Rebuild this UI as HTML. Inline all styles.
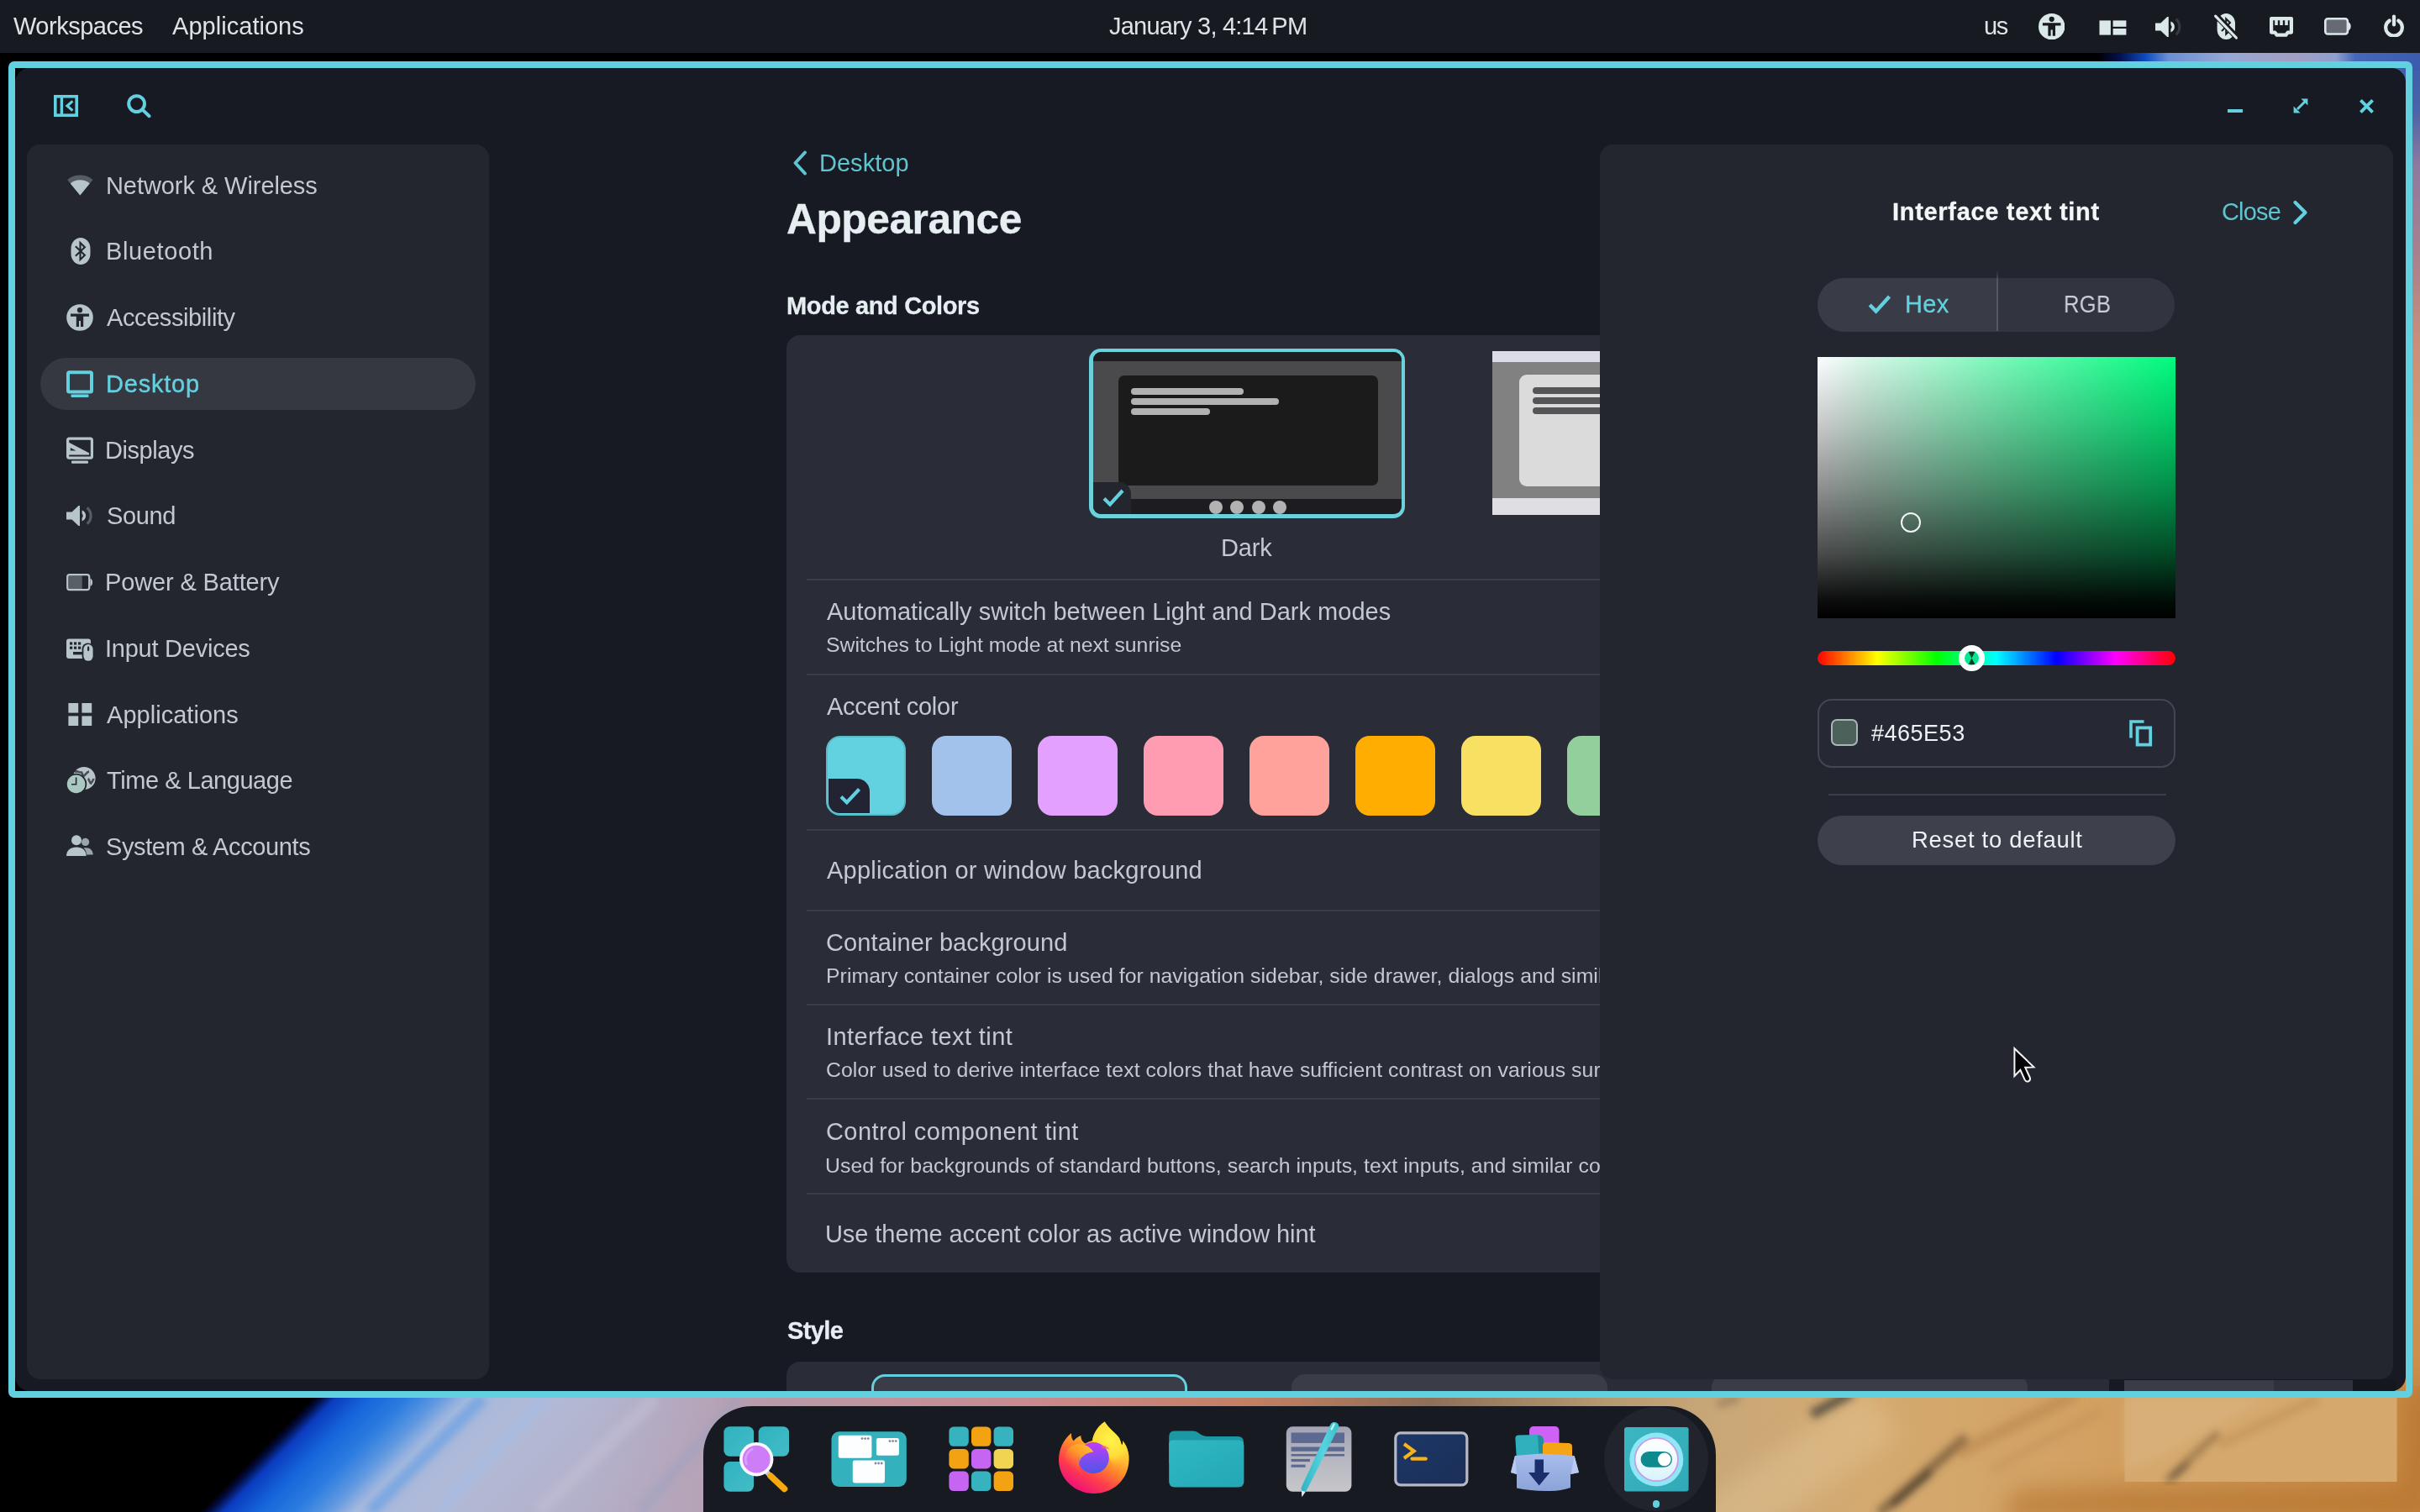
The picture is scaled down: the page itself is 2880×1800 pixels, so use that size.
<!DOCTYPE html>
<html lang="en">
<head>
<meta charset="utf-8">
<title>COSMIC Settings - Appearance</title>
<style>
*{box-sizing:border-box;margin:0;padding:0}
html,body{width:2880px;height:1800px;overflow:hidden;background:#000}
body{position:relative;font-family:"Liberation Sans",sans-serif;font-size:28.0px;color:#c3c9d0}
.abs{position:absolute}
.t{position:absolute;white-space:nowrap;line-height:1;will-change:transform}
#wall{position:absolute;left:0;top:0;width:2880px;height:1800px;background:#000;overflow:hidden}
#panel{position:absolute;left:0;top:0;width:2880px;height:63px;background:#181a22}
#panel .t{color:#dde4e8;font-size:29px;line-height:28px;margin-top:-.35px;top:17.7px}
#panel svg{position:absolute}
#winb{position:absolute;left:10px;top:73px;width:2861px;height:1591px;border:8px solid #63d0df;border-radius:7px}
#win{position:absolute;left:18px;top:81px;width:2845px;height:1575px;border-radius:17px;background:#171a22;overflow:hidden}
#win>.in{position:absolute;left:-18px;top:-81px;width:2880px;height:1800px}
#side{position:absolute;left:32px;top:172px;width:550px;height:1470px;background:#23262f;border-radius:16px}
.nav{position:absolute;left:48px;width:518px;height:62px;border-radius:31px}
.nav.on{background:#363841}
.nav .t{left:80px;top:17.5px;font-size:29px;line-height:28px;margin-top:-.35px;color:#c3c9d0;letter-spacing:.3px}
.nav.on .t{color:#63d0df;-webkit-text-stroke:.4px #63d0df}
.nav svg{position:absolute;left:31px;top:15px;width:32px;height:32px;overflow:visible}
#card{position:absolute;left:936px;top:399px;width:1100px;height:1116px;background:#2a2d37;border-radius:16px}
#card2{position:absolute;left:936px;top:1621px;width:1574px;height:100px;background:#2a2d37;border-radius:16px}
.div{position:absolute;left:960px;width:1000px;height:2px;background:#3b3e48}
.r1{font-size:29px;line-height:28px;margin-top:-.35px;color:#c3c9d0;left:983px;letter-spacing:.25px}
.r2{font-size:24.8px;line-height:24px;margin-top:-.3px;color:#c3c9d0;left:983px;letter-spacing:.2px}
.sw{position:absolute;top:876px;width:95px;height:95px;border-radius:17px}
#drawer{position:absolute;left:1904px;top:172px;width:944px;height:1470px;background:#23262f;border-radius:16px}
.h{font-weight:700;color:#e6eef1;-webkit-text-stroke:.3px #e6eef1}
#dock{position:absolute;left:836.5px;top:1674px;width:1205px;height:200px;background:#181a22;border-radius:58px}
#t1{left:16.00px!important;letter-spacing:-0.500px!important}
#t2{left:205.00px!important;letter-spacing:0.038px!important}
#t3{left:1320.20px!important;letter-spacing:-0.775px!important}
#t4{left:2360.82px!important;letter-spacing:-1.260px!important}
#t5{left:77.66px!important;letter-spacing:-0.070px!important}
#t6{left:77.66px!important;letter-spacing:0.613px!important}
#t7{left:78.56px!important;letter-spacing:-0.405px!important}
#t8{left:77.66px!important;letter-spacing:0.780px!important}
#t9{left:77.48px!important;letter-spacing:-0.446px!important}
#t10{left:78.56px!important;letter-spacing:-0.375px!important}
#t11{left:77.48px!important;letter-spacing:-0.137px!important}
#t12{left:77.48px!important;letter-spacing:-0.240px!important}
#t13{left:78.74px!important;letter-spacing:0.037px!important}
#t14{left:79.28px!important;letter-spacing:-0.447px!important}
#t15{left:78.38px!important;letter-spacing:-0.384px!important}
#t16{left:975.02px!important;letter-spacing:0.020px!important}
#t17{left:935.64px!important;letter-spacing:-0.460px!important}
#t18{left:935.64px!important;letter-spacing:-0.361px!important}
#t19{left:1453.20px!important;letter-spacing:-0.200px!important}
#t21{left:983.90px!important;letter-spacing:0.013px!important}
#t22{left:982.82px!important;letter-spacing:-0.035px!important}
#t23{left:983.72px!important;letter-spacing:-0.275px!important}
#t24{left:983.72px!important;letter-spacing:0.213px!important}
#t25{left:983.00px!important;letter-spacing:0.108px!important}
#t26{left:982.82px!important;letter-spacing:0.044px!important}
#t27{left:982.82px!important;letter-spacing:0.410px!important}
#t28{left:983.00px!important;letter-spacing:0.081px!important}
#t29{left:982.64px!important;letter-spacing:0.406px!important}
#t30{left:982.10px!important;letter-spacing:0.074px!important}
#t31{left:982.10px!important;letter-spacing:-0.073px!important}
#t32{left:936.90px!important;letter-spacing:-0.630px!important}
#t33{left:2252.46px!important;letter-spacing:0.690px!important}
#t34{left:2644.10px!important;letter-spacing:-0.825px!important}
#t35{left:2266.56px!important;letter-spacing:0.310px!important}
#t36{left:2455.56px!important;letter-spacing:0.380px!important}
#t37{left:2226.82px!important;letter-spacing:0.510px!important}
#t38{left:2274.56px!important;letter-spacing:0.734px!important}
</style>
</head>
<body>
<div id="wall">
<svg width="2880" height="1800" viewBox="0 0 2880 1800" style="position:absolute;left:0;top:0">
  <defs>
    <linearGradient id="atm" gradientUnits="userSpaceOnUse" x1="372" y1="1664" x2="656" y2="1944">
      <stop offset="0" stop-color="#000"/>
      <stop offset=".018" stop-color="#020a3a"/>
      <stop offset=".05" stop-color="#0a3cc0"/>
      <stop offset=".12" stop-color="#1565da"/>
      <stop offset=".2" stop-color="#2a7ce0"/>
      <stop offset=".27" stop-color="#5f98e0"/>
      <stop offset=".33" stop-color="#a6b9de"/>
      <stop offset=".5" stop-color="#b2bad6"/>
      <stop offset="1" stop-color="#b5a9c0"/>
    </linearGradient>
    <linearGradient id="land" x1="0" y1="0" x2="1" y2="0">
      <stop offset="0" stop-color="#b3a7bf" stop-opacity="0"/>
      <stop offset=".1" stop-color="#b99aa8"/>
      <stop offset=".24" stop-color="#c98a90"/>
      <stop offset=".36" stop-color="#c47f63"/>
      <stop offset=".46" stop-color="#8f6f58"/>
      <stop offset=".56" stop-color="#b89a72"/>
      <stop offset=".62" stop-color="#caa878"/>
      <stop offset=".7" stop-color="#d4aa70"/>
      <stop offset=".82" stop-color="#d3a162"/>
      <stop offset="1" stop-color="#c98a46"/>
    </linearGradient>
    <linearGradient id="topg" gradientUnits="userSpaceOnUse" x1="2496" y1="0" x2="2880" y2="0">
      <stop offset="0" stop-color="#000"/>
      <stop offset=".07" stop-color="#03104e"/>
      <stop offset=".15" stop-color="#0d4cc0"/>
      <stop offset=".22" stop-color="#6a8fd4"/>
      <stop offset=".4" stop-color="#96a8d6"/>
      <stop offset=".6" stop-color="#a39fc4"/>
      <stop offset=".74" stop-color="#8f9fd0"/>
      <stop offset=".8" stop-color="#4468ba"/>
      <stop offset="1" stop-color="#3b5cae"/>
    </linearGradient>
    <linearGradient id="rightg" gradientUnits="userSpaceOnUse" x1="0" y1="60" x2="0" y2="1800">
      <stop offset="0" stop-color="#3b5cae"/>
      <stop offset=".04" stop-color="#4a63a8"/>
      <stop offset=".08" stop-color="#8f7ba0"/>
      <stop offset=".14" stop-color="#a8808f"/>
      <stop offset=".2" stop-color="#c98f7a"/>
      <stop offset=".3" stop-color="#d9a06c"/>
      <stop offset=".6" stop-color="#d39a5c"/>
      <stop offset="1" stop-color="#c98c48"/>
    </linearGradient>
  <filter id="bl2" x="-10%" y="-30%" width="120%" height="160%"><feGaussianBlur stdDeviation="14"/></filter>
  <filter id="bl" x="-5%" y="-5%" width="110%" height="110%"><feGaussianBlur stdDeviation="5"/></filter>
  </defs>
  <rect x="0" y="60" width="2880" height="50" fill="url(#topg)"/>
  <rect x="2845" y="84" width="35" height="1716" fill="url(#rightg)"/>
  <rect x="0" y="1650" width="2880" height="150" fill="url(#atm)"/>
  <rect x="700" y="1650" width="2180" height="150" fill="url(#land)"/>
  <g filter="url(#bl2)"><path d="M2030 1830 L2240 1680" stroke="#e2c696" stroke-width="70" opacity=".45"/><path d="M2380 1810 L2400 1775 L2528 1768 L2856 1768 L2862 1650 L2900 1650 L2900 1810 Z" fill="#b5742f" opacity=".7"/></g>
  <g filter="url(#bl)">
    <path d="M520 1800 L650 1664" stroke="#9fc0ee" stroke-width="10" opacity=".55"/>
    <path d="M440 1800 L575 1664" stroke="#4d93e6" stroke-width="14" opacity=".5"/>
    <path d="M640 1800 L780 1664" stroke="#c6c2d8" stroke-width="16" opacity=".5"/>
    <path d="M760 1800 L880 1664" stroke="#9a9fc0" stroke-width="12" opacity=".45"/>
    <path d="M2236 1802 L2340 1711" stroke="#5a4530" stroke-width="12" opacity=".6"/>
    <path d="M2252 1792 L2298 1752" stroke="#2c2824" stroke-width="7" opacity=".75"/>
    <path d="M2330 1730 L2470 1660" stroke="#b07c48" stroke-width="16" opacity=".4"/>
    <path d="M2370 1750 L2500 1680" stroke="#b8844c" stroke-width="10" opacity=".3"/>
    <path d="M2156 1684 L2204 1658" stroke="#3e3c34" stroke-width="12" opacity=".75"/>
    <path d="M2044 1672 L2070 1664" stroke="#6a5a48" stroke-width="8" opacity=".5"/>
  </g>
  <rect x="2528.5" y="1640" width="324" height="124" fill="#d5a96e"/>
  <g filter="url(#bl)"><path d="M2578 1764 L2640 1705" stroke="#7a5a38" stroke-width="9" opacity=".55"/><path d="M2584 1760 L2604 1742" stroke="#3a3430" stroke-width="6" opacity=".6"/><path d="M2640 1720 L2760 1664" stroke="#b8844c" stroke-width="14" opacity=".35"/><path d="M2528 1664 L2700 1664 L2560 1740 L2528 1750 Z" fill="#dcb684" opacity=".5"/></g>
</svg>
</div>
<div id="panel">
  <span id="t1" class="t" style="left:16px">Workspaces</span>
  <span id="t2" class="t" style="left:205px;letter-spacing:.4px">Applications</span>
  <span id="t3" class="t" style="left:1322px">January 3, 4:14&#8239;PM</span>
  <span id="t4" class="t" style="left:2361px">us</span>
  <!-- accessibility -->
  <svg style="left:2425.5px;top:16px" width="31.4" height="31.4" viewBox="0 0 32 32"><circle cx="16" cy="16" r="16" fill="#dbe8ea"/><circle cx="16" cy="7" r="3.2" fill="#181a22"/><path d="M5 11.4 H27 V14.8 H20.4 V27.2 H17.1 V20 H14.9 V27.2 H11.6 V14.8 H5 Z" fill="#181a22"/></svg>
  <!-- tiling -->
  <svg style="left:2498px;top:23.6px" width="33" height="18" viewBox="0 0 33 18"><rect x=".5" y=".4" width="13.4" height="17.2" fill="#dbe8ea"/><rect x="16.6" y=".4" width="15.8" height="7.4" fill="#dbe8ea"/><rect x="16.6" y="10" width="15.8" height="7.6" fill="#dbe8ea"/></svg>
  <!-- volume -->
  <svg style="left:2565px;top:19.5px" width="32" height="24" viewBox="0 0 32 24"><path d="M0 7.4 H6.4 L14.2 0 H15.8 V24 H14.2 L6.4 16.6 H0 Z" fill="#dbe8ea"/><path d="M18.4 5.6 C24.4 7.6 24.4 16.4 18.4 18.4 V14.6 C20 13.4 20 10.6 18.4 9.4 Z" fill="#dbe8ea"/><path d="M24.6 2.8 C30.2 7.2 30.2 16.8 24.6 21.2" fill="none" stroke="#dbe8ea" stroke-width="3" opacity=".16"/></svg>
  <!-- bluetooth off -->
  <svg style="left:2634px;top:15px" width="30" height="33" viewBox="0 0 30 33"><rect x="4.6" y="1" width="21.4" height="31" rx="10.7" ry="12" fill="#dbe8ea"/><path d="M10 11 L20 21 L15.2 25.6 V7.4 L20 12 L10 22" fill="none" stroke="#181a22" stroke-width="2"/><path d="M2.2 2.4 L29 30.4" stroke="#181a22" stroke-width="7"/><path d="M2.6 4.2 L27.4 30" stroke="#dbe8ea" stroke-width="3.2" stroke-linecap="round"/></svg>
  <!-- wired -->
  <svg style="left:2700.5px;top:19.5px" width="28" height="24" viewBox="0 0 28 24"><path d="M2.1 2.1 H25.9 V18.6 H21.6 L19.4 21.7 H8.6 L6.4 18.6 H2.1 Z" fill="none" stroke="#dbe8ea" stroke-width="4.2" stroke-linejoin="round"/><path d="M6.2 3 H9.8 V10 H6.2 Z M12.2 3 H15.8 V10 H12.2 Z M18.2 3 H21.8 V10 H18.2 Z" fill="#dbe8ea"/></svg>
  <!-- battery -->
  <svg style="left:2765.5px;top:21px" width="33" height="21" viewBox="0 0 33 21"><rect x="1.3" y="1.3" width="26.6" height="18.2" rx="3" fill="#676a75" stroke="#dbe8ea" stroke-width="2.6"/><path d="M29 5.6 C32.6 6.6 32.6 14.2 29 15.2 Z" fill="#dbe8ea"/></svg>
  <!-- power -->
  <svg style="left:2835.8px;top:16.6px" width="26" height="27" viewBox="0 0 26 27"><path d="M7.6 7.6 A9.8 9.8 0 1 0 18.4 7.6" fill="none" stroke="#dbe8ea" stroke-width="4.3" stroke-linecap="round"/><path d="M13 2.6 V12.4" stroke="#dbe8ea" stroke-width="4.2" stroke-linecap="round"/></svg>
</div>
<div id="winb"></div><div id="win"><div class="in">
<div id="side"></div>
<div class="nav" style="top:189.5px"><svg viewBox="0 0 32 32"><g transform="translate(.5,-1.2)"><path d="M15.8 28.6 L0.6 10.2 A24 24 0 0 1 31 10.2 Z" fill="#b7c5c9" opacity=".34"/><path d="M15.8 28.6 L4.3 14.6 A18.2 18.2 0 0 1 27.3 14.6 Z" fill="#b7c5c9"/></g></svg><span id="t5" class="t">Network &amp; Wireless</span></div>
<div class="nav" style="top:268.2px"><svg viewBox="0 0 32 32"><g transform="translate(.9,0)"><rect x="4.6" y="0" width="23" height="32" rx="11.5" ry="13" fill="#b7c5c9"/><path d="M10 10.2 L21 20.8 L15.6 26 V6 L21 11.2 L10 21.8" fill="none" stroke="#23262f" stroke-width="2.1" stroke-linejoin="miter"/></g></svg><span id="t6" class="t">Bluetooth</span></div>
<div class="nav" style="top:347.0px"><svg viewBox="0 0 32 32"><circle cx="16" cy="16" r="15.8" fill="#b7c5c9"/><circle cx="16" cy="7.2" r="3.1" fill="#23262f"/><path d="M5 11.6 H27 V14.8 H20.2 V27 H17 V20 H15 V27 H11.8 V14.8 H5 Z" fill="#23262f"/></svg><span id="t7" class="t">Accessibility</span></div>
<div class="nav on" style="top:425.7px"><svg viewBox="0 0 32 32"><rect x="2" y="2.2" width="28" height="23.2" rx="1.5" fill="none" stroke="#63d0df" stroke-width="4"/><rect x="5.5" y="28.6" width="21" height="3.4" rx="1" fill="#63d0df"/></svg><span id="t8" class="t">Desktop</span></div>
<div class="nav" style="top:504.5px"><svg viewBox="0 0 32 32"><rect x="1.6" y="2.2" width="28.8" height="23" rx="2" fill="none" stroke="#b7c5c9" stroke-width="3.2"/><path d="M1.6 6 L27 19.2 V21.6 H1.6 Z" fill="#b7c5c9"/><path d="M4.8 13 L11.5 16.6 H4.8 Z" fill="#23262f"/><rect x="6" y="28.6" width="20" height="3.2" rx="1" fill="#b7c5c9"/></svg><span id="t9" class="t">Displays</span></div>
<div class="nav" style="top:583.2px"><svg viewBox="0 0 32 32"><path d="M0 11.5 H6.5 L14.5 4 H16 V28 H14.5 L6.5 20.5 H0 Z" fill="#b7c5c9"/><path d="M18.6 9.6 C24.6 11.6 24.6 20.4 18.6 22.4 V18.6 C20.2 17.4 20.2 14.6 18.6 13.4 Z" fill="#b7c5c9"/><path d="M24.6 6.4 C30.6 11 30.6 21 24.6 25.6" fill="none" stroke="#b7c5c9" stroke-width="3.2" opacity=".35"/></svg><span id="t10" class="t">Sound</span></div>
<div class="nav" style="top:661.9px"><svg viewBox="0 0 32 32"><rect x="1.2" y="7.2" width="26" height="18" rx="2.6" fill="none" stroke="#b7c5c9" stroke-width="2.2"/><rect x="2.3" y="8.3" width="16.4" height="15.8" fill="#b7c5c9" opacity=".36"/><path d="M28.4 11.5 C32 12.5 32 19.9 28.4 20.9 Z" fill="#b7c5c9"/></svg><span id="t11" class="t">Power &amp; Battery</span></div>
<div class="nav" style="top:740.7px"><svg viewBox="0 0 32 32"><rect x="0" y="4.5" width="29" height="23.5" rx="3" fill="#b7c5c9"/><g fill="#23262f"><rect x="4" y="8.4" width="3.2" height="3.2"/><rect x="9" y="8.4" width="3.2" height="3.2"/><rect x="14" y="8.4" width="3.2" height="3.2"/><rect x="4" y="13.6" width="3.2" height="3.2"/><rect x="9" y="13.6" width="3.2" height="3.2"/><rect x="14" y="13.6" width="3.2" height="3.2"/><rect x="8" y="20" width="11" height="3.4"/><rect x="18.6" y="9.4" width="14" height="23" rx="7"/></g><rect x="20.4" y="11" width="11.2" height="19.8" rx="5.6" fill="#b7c5c9"/><rect x="25" y="13.6" width="2.2" height="5.6" rx="1.1" fill="#23262f"/></svg><span id="t12" class="t">Input Devices</span></div>
<div class="nav" style="top:819.4px"><svg viewBox="0 0 32 32"><g fill="#b7c5c9"><rect x="2.4" y="3" width="11.8" height="11.6"/><rect x="18.4" y="3" width="11.8" height="11.6"/><rect x="2.4" y="18.4" width="11.8" height="11.6"/><rect x="18.4" y="18.4" width="11.8" height="11.6"/></g></svg><span id="t13" class="t">Applications</span></div>
<div class="nav" style="top:898.2px"><svg viewBox="0 0 32 32"><circle cx="21" cy="13.5" r="13.6" fill="#b7c5c9"/><path d="M10 6 C13 4 15 7 18 6.4 C20 8 18 10 20.4 11 C23 9.6 24 6 27 5.4 M25.6 14 C27.6 15 27 18 29.2 19.6 C30.6 18 31.6 16 32.6 14" fill="none" stroke="#23262f" stroke-width="2.6" opacity=".75"/><circle cx="11.6" cy="20.4" r="12.6" fill="#23262f"/><circle cx="11.6" cy="20.4" r="10.8" fill="#a9c9c0"/><path d="M11.6 12.6 V20.8 H6" fill="none" stroke="#23262f" stroke-width="1.6"/></svg><span id="t14" class="t">Time &amp; Language</span></div>
<div class="nav" style="top:976.9px"><svg viewBox="0 0 32 32"><g fill="#b7c5c9"><circle cx="22.6" cy="10.4" r="4.6" opacity=".8"/><path d="M20.5 17.6 C27 16 31.6 19.6 31.8 25.6 H24 C23.8 22 22.6 19.4 20.5 17.6 Z" opacity=".8"/><circle cx="12" cy="8.2" r="6"/><path d="M0 27 C0 20 5 16.4 12 16.4 C19 16.4 23.6 20 23.6 27 Z"/></g></svg><span id="t15" class="t">System &amp; Accounts</span></div>
<!-- window header icons -->
<svg class="abs" style="left:64px;top:113px" width="29" height="26" viewBox="0 0 29 26"><rect x="1.8" y="1.8" width="25.4" height="22.4" fill="none" stroke="#63d0df" stroke-width="3.6"/><path d="M9.4 2 V24" stroke="#63d0df" stroke-width="3.4"/><path d="M22.4 7.4 L16 13 L22.4 18.6" fill="none" stroke="#63d0df" stroke-width="3.2"/></svg>
<svg class="abs" style="left:150px;top:111px" width="31" height="31" viewBox="0 0 31 31"><circle cx="12.6" cy="12.6" r="9.4" fill="none" stroke="#63d0df" stroke-width="4"/><path d="M19.6 19.6 L27.6 27.2" stroke="#63d0df" stroke-width="4" stroke-linecap="round"/></svg>
<div class="abs" style="left:2651px;top:130px;width:17.5px;height:4px;background:#63d0df"></div>
<svg class="abs" style="left:2728px;top:116px" width="20" height="20" viewBox="0 0 20 20"><path d="M6 14 L15 5" stroke="#63d0df" stroke-width="3"/><path d="M10.4 1.6 H18.4 V9.6 Z M1.6 10.4 V18.4 H9.6 Z" fill="#63d0df"/></svg>
<svg class="abs" style="left:2807px;top:117px" width="19" height="19" viewBox="0 0 19 19"><path d="M2.4 2.4 L16.6 16.6 M16.6 2.4 L2.4 16.6" stroke="#63d0df" stroke-width="3.8"/></svg>
<div id="main">
  <svg class="abs" style="left:942px;top:178px" width="20" height="32" viewBox="0 0 20 32"><path d="M16 3.5 L4.5 16 L16 28.5" fill="none" stroke="#5fc4cf" stroke-width="4" stroke-linecap="round" stroke-linejoin="round"/></svg>
  <span id="t16" class="t" style="left:977px;top:180.1px;color:#5fc4cf;font-size:29px;line-height:28px;margin-top:-.35px;letter-spacing:.2px">Desktop</span>
  <span id="t17" class="t h" style="left:936px;top:237.2px;font-size:49.7px;line-height:48px;margin-top:-.6px;letter-spacing:.3px">Appearance</span>
  <span id="t18" class="t h" style="left:936px;top:350px;font-size:29px;line-height:28px;margin-top:-.35px">Mode and Colors</span>
  <div id="card"></div>
  <!-- dark mode thumbnail -->
  <div class="abs" style="left:1296px;top:414.6px;width:376.4px;height:202.4px;border-radius:14px;background:#6bd2dc"></div>
  <div class="abs" style="left:1300.5px;top:419.1px;width:367.4px;height:193.4px;border-radius:9.5px;background:#4a4a4c;overflow:hidden">
    <div class="abs" style="left:0;top:0;width:368px;height:11px;background:#1c1c21"></div>
    <div class="abs" style="left:0;top:174.5px;width:368px;height:20px;background:#1c1c21"></div>
    <div class="abs" style="left:30px;top:28px;width:309px;height:131px;border-radius:7px;background:#1b1b1c"></div>
    <div class="abs" style="left:45.5px;top:43px;width:134px;height:8px;border-radius:4px;background:#b2b2b2"></div>
    <div class="abs" style="left:45.5px;top:55px;width:176px;height:8px;border-radius:4px;background:#b2b2b2"></div>
    <div class="abs" style="left:45.5px;top:67px;width:94px;height:7.5px;border-radius:4px;background:#b2b2b2"></div>
    <div class="abs" style="left:138.5px;top:176.6px;width:16px;height:16px;border-radius:8px;background:#b2b2b2"></div>
    <div class="abs" style="left:163.8px;top:176.6px;width:16px;height:16px;border-radius:8px;background:#b2b2b2"></div>
    <div class="abs" style="left:189.1px;top:176.6px;width:16px;height:16px;border-radius:8px;background:#b2b2b2"></div>
    <div class="abs" style="left:214.4px;top:176.6px;width:16px;height:16px;border-radius:8px;background:#b2b2b2"></div>
    <div class="abs" style="left:-4px;top:154.5px;width:49px;height:44px;border-radius:0 14px 0 0;background:#23252f"></div>
  </div>
  <svg class="abs" style="left:1311px;top:580px" width="28" height="26" viewBox="0 0 28 26"><path d="M3 13.5 L10 20.5 L25 4" fill="none" stroke="#63d0df" stroke-width="4.2"/></svg>
  <span id="t19" class="t r1" style="left:1455px;top:638.6px;letter-spacing:.4px">Dark</span>
  <!-- light mode thumbnail -->
  <div class="abs" style="left:1776px;top:418px;width:372px;height:195px;background:#818182;overflow:hidden">
    <div class="abs" style="left:0;top:0;width:372px;height:12.5px;background:#dcdce6"></div>
    <div class="abs" style="left:0;top:175px;width:372px;height:20px;background:#dedee4"></div>
    <div class="abs" style="left:31.5px;top:27.5px;width:309px;height:133px;border-radius:9px;background:#dbdbdc"></div>
    <div class="abs" style="left:47.5px;top:43px;width:134px;height:8px;border-radius:4px;background:#555557"></div>
    <div class="abs" style="left:47.5px;top:55px;width:176px;height:8px;border-radius:4px;background:#555557"></div>
    <div class="abs" style="left:47.5px;top:67px;width:94px;height:7.5px;border-radius:4px;background:#555557"></div>
  </div>
  <span id="t20" class="t r1" style="left:1930px;top:638.6px">Light</span>
  <div class="div" style="top:688.6px"></div>
  <span id="t21" class="t r1" style="top:714px">Automatically switch between Light and Dark modes</span>
  <span id="t22" class="t r2" style="top:756.7px">Switches to Light mode at next sunrise</span>
  <div class="div" style="top:801.8px"></div>
  <span id="t23" class="t r1" style="top:827px">Accent color</span>
  <div class="sw" style="left:983px;background:#62d2e0;border:2px solid #58bcc6"></div>
  <div class="abs" style="left:986px;top:927px;width:49px;height:41px;background:#222433;border-radius:0 15px 0 13px"></div>
  <svg class="abs" style="left:998px;top:936px" width="28" height="24" viewBox="0 0 28 24"><path d="M3 12.5 L9.8 19.3 L24.5 3.5" fill="none" stroke="#63d0df" stroke-width="4.2"/></svg>
  <div class="sw" style="left:1109px;background:#a2c2ec"></div>
  <div class="sw" style="left:1235px;background:#e4a0fe"></div>
  <div class="sw" style="left:1361px;background:#ff9cb1"></div>
  <div class="sw" style="left:1487px;background:#ffa29c"></div>
  <div class="sw" style="left:1613px;background:#ffad00"></div>
  <div class="sw" style="left:1739px;background:#f7e062"></div>
  <div class="sw" style="left:1865px;background:#92cf9c"></div>
  <div class="div" style="top:986.7px"></div>
  <span id="t24" class="t r1" style="top:1022.2px">Application or window background</span>
  <div class="div" style="top:1082.7px"></div>
  <span id="t25" class="t r1" style="top:1107.9px">Container background</span>
  <span id="t26" class="t r2" style="top:1150.7px">Primary container color is used for navigation sidebar, side drawer, dialogs and similar widgets</span>
  <div class="div" style="top:1195.3px"></div>
  <span id="t27" class="t r1" style="top:1220.7px">Interface text tint</span>
  <span id="t28" class="t r2" style="top:1262.5px">Color used to derive interface text colors that have sufficient contrast on various surfaces</span>
  <div class="div" style="top:1307.3px"></div>
  <span id="t29" class="t r1" style="top:1333.2px">Control component tint</span>
  <span id="t30" class="t r2" style="top:1376.2px">Used for backgrounds of standard buttons, search inputs, text inputs, and similar components</span>
  <div class="div" style="top:1420.3px"></div>
  <span id="t31" class="t r1" style="top:1455.8px">Use theme accent color as active window hint</span>
  <span id="t32" class="t h" style="left:936px;top:1570px;font-size:29px;line-height:28px;margin-top:-.35px">Style</span>
  <div id="card2"></div>
  <div class="abs" style="left:1037px;top:1636px;width:376px;height:60px;border-radius:16px;border:3.6px solid #63d0df;background:#3a3d48"></div>
  <div class="abs" style="left:1537px;top:1636px;width:376px;height:60px;border-radius:16px;background:#3a3d48"></div>
  <div class="abs" style="left:2037px;top:1636px;width:376px;height:60px;border-radius:16px;background:#3a3d48"></div>
  <div class="abs" style="left:2528px;top:1642px;width:324px;height:30px;background:#15171e"></div>
  <div class="abs" style="left:2528px;top:1643px;width:178px;height:30px;background:#3a3d48"></div>
  <div class="abs" style="left:2706px;top:1643px;width:94px;height:30px;background:#2f323c"></div>
</div>
<div id="drawer"></div>
<div id="dr">
  <span id="t33" class="t" style="left:2253px;top:238.5px;font-size:29px;line-height:28px;margin-top:-.35px;font-weight:700;color:#f4f7f8;letter-spacing:.55px;-webkit-text-stroke:.3px #f4f7f8">Interface text tint</span>
  <span id="t34" class="t" style="left:2645px;top:238.5px;font-size:29px;line-height:28px;margin-top:-.35px;color:#5fc4cf;letter-spacing:.3px">Close</span>
  <svg class="abs" style="left:2726px;top:236px" width="24" height="34" viewBox="0 0 24 34"><path d="M5.5 5 L17.5 17 L5.5 29" fill="none" stroke="#63d0df" stroke-width="4.2" stroke-linecap="round" stroke-linejoin="round"/></svg>
  <!-- segmented control -->
  <div class="abs" style="left:2163px;top:330.5px;width:425px;height:64px;border-radius:32px;background:#32353f;overflow:hidden">
    <div class="abs" style="left:0;top:0;width:213.5px;height:64px;background:#393c47"></div>
  </div>
  <div class="abs" style="left:2376px;top:322px;width:2px;height:72px;background:linear-gradient(#23262f00,#555862 18%,#555862)"></div>
  <svg class="abs" style="left:2222px;top:349px" width="30" height="27" viewBox="0 0 30 27"><path d="M3.2 14 L10.6 21.6 L26.5 4" fill="none" stroke="#63d0df" stroke-width="4.4"/></svg>
  <span id="t35" class="t" style="left:2268px;top:348.6px;font-size:29px;line-height:28px;margin-top:-.35px;color:#63d0df;letter-spacing:.4px;-webkit-text-stroke:.3px #63d0df">Hex</span>
  <span id="t36" class="t" style="left:2457px;top:348.6px;font-size:29px;line-height:28px;margin-top:-.35px;color:#c9cfd5;transform:scaleX(.88);transform-origin:0 0">RGB</span>
  <!-- saturation / value field -->
  <div class="abs" style="left:2163px;top:425px;width:426px;height:311px;background:linear-gradient(to bottom,rgba(0,0,0,0) 0%,rgba(0,0,0,.2) 25%,rgba(0,0,0,.43) 50%,rgba(0,0,0,.7) 75%,rgba(0,0,0,.95) 93%,#000 100%),linear-gradient(to right,#fdfdff 0%,#d4f7e6 14%,#00fb7e 100%)"></div>
  <div class="abs" style="left:2261.5px;top:609.5px;width:24px;height:24px;border-radius:12px;border:2.4px solid #f2f5f5"></div>
  <!-- hue slider -->
  <div class="abs" style="left:2163px;top:775px;width:426px;height:17px;border-radius:8.5px;background:linear-gradient(to right,#f00 0%,#ff0 16.66%,#0f0 33.33%,#0ff 50%,#00f 66.66%,#f0f 83.33%,#f00 100%)"></div>
  <div class="abs" style="left:2330.9px;top:768.1px;width:31px;height:31px;border-radius:50%;background:#05e88f;border:7.6px solid #fbfefd"></div>
  <svg class="abs" style="left:2338px;top:775.2px" width="17" height="17" viewBox="0 0 17 17"><path d="M4.6 1 H12.4 L8.5 8.4 Z M4.6 16 H12.4 L8.5 8.6 Z" fill="#063d27"/></svg>
  <!-- hex input -->
  <div class="abs" style="left:2163px;top:831.5px;width:426px;height:82px;border-radius:17px;border:2.4px solid #434751;background:#262933"></div>
  <div class="abs" style="left:2179px;top:856px;width:32px;height:32px;border-radius:7px;border:2.2px solid #a9b6b5;background:#4b6159"></div>
  <span id="t37" class="t" style="left:2227px;top:860.1px;font-size:27px;line-height:26px;margin-top:-.35px;color:#eef2f4;letter-spacing:.6px">#465E53</span>
  <svg class="abs" style="left:2534px;top:857px" width="28" height="32" viewBox="0 0 28 32"><path d="M2 21.5 V2 H17.5" fill="none" stroke="#63d0df" stroke-width="3.6"/><rect x="9.6" y="9.4" width="15.6" height="20.2" fill="none" stroke="#63d0df" stroke-width="3.8"/></svg>
  <div class="abs" style="left:2176px;top:945px;width:402px;height:2px;background:#3b3e48"></div>
  <div class="abs" style="left:2163px;top:970.5px;width:426px;height:59px;border-radius:30px;background:#3e414b"></div>
  <span id="t38" class="t" style="left:2276px;top:987.1px;font-size:27.4px;line-height:26.5px;margin-top:-.35px;color:#eef2f4;letter-spacing:.65px">Reset to default</span>
  <!-- pointer -->
  <svg class="abs" style="left:2394px;top:1244.3px" width="32" height="48" viewBox="0 0 32 48"><path d="M3.4 4.2 V37 L10.4 29.8 L15.6 41.4 Q17.2 44.4 20.2 43.2 Q22.8 41.8 21.8 39 L16.2 26.8 L26.4 26.4 Z" fill="#050508" stroke="#f4f4f8" stroke-width="2" stroke-linejoin="miter"/></svg>
</div>
</div></div>
<div id="dock"></div>
<div id="dockicons">
<!-- launcher -->
<svg class="abs" style="left:860px;top:1697px" width="82" height="82" viewBox="0 0 82 82">
  <defs><linearGradient id="tl" x1="0" y1="0" x2="1" y2="1"><stop offset="0" stop-color="#2fb3bf"/><stop offset="1" stop-color="#43bcc7"/></linearGradient></defs>
  <rect x="1.4" y="1.3" width="35.6" height="35.4" rx="7" fill="url(#tl)"/><rect x="42.7" y="1.3" width="36.3" height="35.4" rx="7" fill="url(#tl)"/><rect x="1.4" y="43" width="35.6" height="35.7" rx="7" fill="url(#tl)"/>
  <path d="M52 55 L57.5 60.5" stroke="#c9c9d4" stroke-width="6"/>
  <path d="M57 60 L73.5 75.5" stroke="#f6a80f" stroke-width="7.6" stroke-linecap="round"/>
  <circle cx="40.2" cy="40.2" r="20.2" fill="#fbf6ff"/><circle cx="40.2" cy="40.2" r="16.4" fill="#cc7df7"/><path d="M28.5 46 A13.5 13.5 0 0 1 35 28.4" fill="none" stroke="#dca1fb" stroke-width="2.6" stroke-linecap="round"/>
</svg>
<!-- workspaces -->
<svg class="abs" style="left:989px;top:1703px" width="91" height="68" viewBox="0 0 91 68">
  <rect x=".5" y="1.3" width="89.3" height="65.7" rx="9" fill="#33b1bd"/>
  <rect x="8.8" y="5.8" width="39.6" height="27" rx="2.4" fill="#fdfeff"/><rect x="53.9" y="9" width="27" height="20.8" rx="2.4" fill="#fdfeff"/><rect x="25.8" y="35.5" width="38.2" height="27" rx="2.4" fill="#fdfeff"/>
  <g fill="#7f8a96"><circle cx="37" cy="9.6" r="1.4"/><circle cx="40.6" cy="9.6" r="1.4"/><circle cx="44.2" cy="9.6" r="1.4"/><circle cx="70" cy="12.6" r="1.4"/><circle cx="73.6" cy="12.6" r="1.4"/><circle cx="77.2" cy="12.6" r="1.4"/><circle cx="53" cy="39" r="1.4"/><circle cx="56.6" cy="39" r="1.4"/><circle cx="60.2" cy="39" r="1.4"/></g>
</svg>
<!-- app grid -->
<svg class="abs" style="left:1128px;top:1697px" width="80" height="80" viewBox="0 0 80 80">
  <g><rect x="1.4" y="1.4" width="23.4" height="23.4" rx="5.5" fill="#36b3bf"/><rect x="28" y="1.4" width="23.4" height="23.4" rx="5.5" fill="#f3a312"/><rect x="54.6" y="1.4" width="23.4" height="23.4" rx="5.5" fill="#36b3bf"/>
  <rect x="1.4" y="28" width="23.4" height="23.4" rx="5.5" fill="#f3a312"/><rect x="28" y="28" width="23.4" height="23.4" rx="5.5" fill="#c565f2"/><rect x="54.6" y="28" width="23.4" height="23.4" rx="5.5" fill="#f1d452"/>
  <rect x="1.4" y="54.6" width="23.4" height="23.4" rx="5.5" fill="#c565f2"/><rect x="28" y="54.6" width="23.4" height="23.4" rx="5.5" fill="#36b3bf"/><rect x="54.6" y="54.6" width="23.4" height="23.4" rx="5.5" fill="#f3a312"/></g>
</svg>
<!-- firefox -->
<svg class="abs" style="left:1258px;top:1690px" width="88" height="90" viewBox="0 0 88 90">
  <defs>
    <linearGradient id="ff1" gradientUnits="userSpaceOnUse" x1="70" y1="8" x2="22" y2="84"><stop offset="0" stop-color="#fff23e"/><stop offset=".28" stop-color="#ffc934"/><stop offset=".5" stop-color="#ff8a2a"/><stop offset=".74" stop-color="#ff3d4c"/><stop offset="1" stop-color="#ee0f7c"/></linearGradient>
    <radialGradient id="ffy" gradientUnits="userSpaceOnUse" cx="64" cy="24" r="34"><stop offset="0" stop-color="#fff44a"/><stop offset=".6" stop-color="#ffe03a" stop-opacity=".85"/><stop offset="1" stop-color="#ffb02e" stop-opacity="0"/></radialGradient>
    <linearGradient id="ff2" x1="0" y1="0" x2="0" y2="1"><stop offset="0" stop-color="#c23df6"/><stop offset=".45" stop-color="#8a4af2"/><stop offset="1" stop-color="#4f55e6"/></linearGradient>
    <linearGradient id="ff3" gradientUnits="userSpaceOnUse" x1="40" y1="30" x2="12" y2="62"><stop offset="0" stop-color="#ffc22e"/><stop offset=".4" stop-color="#ff9a2a"/><stop offset=".85" stop-color="#ff6a38" stop-opacity="0"/></linearGradient>
  </defs>
  <path id="ffb" d="M56.7 2.4 C61 10 70 16 74 22 C75.4 25 76.4 28 77 30.7 C78.4 29 78.8 27 78 25 C84.6 33 87.4 44 84.4 57 C80 76 63 88 44 88 C21 88 2 70 2 48 C2 36 7 24 17 16 C16.6 19.6 17.6 23 19.6 25.6 C21.6 22.6 24.6 20.4 28.4 19 C28 22.4 30 26.4 33.4 28.4 C36 27 39 25.8 42 25 C43 17 48 8 56.7 2.4 Z" fill="url(#ff1)"/>
  <path d="M56.7 2.4 C61 10 70 16 74 22 C75.4 25 76.4 28 77 30.7 C78.4 29 78.8 27 78 25 C84.6 33 87.4 44 84.4 57 C82 66 76 74 68 80 C74 60 62 40 42 25 C43 17 48 8 56.7 2.4 Z" fill="url(#ffy)"/>
  <circle cx="43.2" cy="45.6" r="18.6" fill="url(#ff2)"/>
  <path d="M10 42 C11 33 20 27.6 30 29.6 C36 30.6 40.4 34 43.4 38.6 C36.4 39 30.4 42.6 27.6 48 C24.6 54 26 60.6 31 65.6 C18 64 8.6 54 10 42 Z" fill="url(#ff3)"/>
  <path d="M53 31 C57 30.6 60.6 32.8 62.6 35.6 C59.4 34.4 56.4 34 53.6 34.4 Z" fill="#f0607a" opacity=".75"/>
</svg>
<!-- files -->
<svg class="abs" style="left:1390px;top:1702px" width="92" height="70" viewBox="0 0 92 70">
  <defs><linearGradient id="fo" x1="0" y1="0" x2="1" y2="1"><stop offset="0" stop-color="#2fb9c4"/><stop offset="1" stop-color="#23a7b4"/></linearGradient></defs>
  <path d="M1.2 8 Q1.2 1.4 7.8 1.4 H30 Q34 1.4 37 4.2 Q41.6 8 47 8 H83 Q90 8 90 15 V40 H1.2 Z" fill="#1c98a5"/>
  <path d="M1.2 17 Q1.2 12.6 5.8 12.6 H84 Q90.4 12.6 90.4 19 V61.6 Q90.4 68.4 83.6 68.4 H8 Q1.2 68.4 1.2 61.6 Z" fill="url(#fo)"/>
</svg>
<!-- text editor -->
<svg class="abs" style="left:1528px;top:1690px" width="84" height="94" viewBox="0 0 84 94">
  <defs><linearGradient id="pp" x1="0" y1="0" x2="0" y2="1"><stop offset="0" stop-color="#a2a3b6"/><stop offset=".5" stop-color="#b7b7c2"/><stop offset="1" stop-color="#c6c6ca"/></linearGradient>
  <linearGradient id="pen" x1="0" y1="0" x2="1" y2="0"><stop offset="0" stop-color="#2fb5c2"/><stop offset=".6" stop-color="#58d3df"/><stop offset="1" stop-color="#38bfcb"/></linearGradient></defs>
  <rect x="2.8" y="8.3" width="77.6" height="77.4" rx="7.5" fill="url(#pp)"/>
  <g fill="#5c6a92"><rect x="8.6" y="15.5" width="63.4" height="12.4"/><rect x="8.6" y="32.5" width="63.4" height="5.3"/><rect x="8.6" y="41" width="63.4" height="2.6"/><rect x="8.6" y="46.9" width="22.4" height="3.2"/><rect x="8.6" y="53.6" width="17" height="3.2"/></g>
  <path d="M55 6.5 Q57.6 1.6 62.4 3.6 Q66.6 5.8 64.4 10.4 L27.6 83 L21.4 92 L20.6 81 Z" fill="url(#pen)"/>
  <path d="M20.9 84.5 L21.4 92 L25.6 86 Z" fill="#dfe8ea"/>
  <path d="M59.6 5.4 L56.6 11.6" stroke="#c8f3f7" stroke-width="2.2" stroke-linecap="round"/>
</svg>
<!-- terminal -->
<svg class="abs" style="left:1658px;top:1703px" width="92" height="68" viewBox="0 0 92 68">
  <defs><linearGradient id="tm" x1="0" y1="0" x2="1" y2="1"><stop offset="0" stop-color="#1e3767"/><stop offset="1" stop-color="#1a2f58"/></linearGradient></defs>
  <rect x="2.8" y="2.9" width="85" height="62" rx="6" fill="url(#tm)" stroke="#b7b8c6" stroke-width="3.2"/>
  <path d="M13 16 L24.6 24.4 L13 33" fill="none" stroke="#f6b31b" stroke-width="4.2"/><path d="M22.6 33.6 H38.6" stroke="#f6b31b" stroke-width="4.4" stroke-linecap="round"/>
</svg>
<!-- shop -->
<svg class="abs" style="left:1796px;top:1695px" width="84" height="84" viewBox="0 0 84 84">
  <defs><linearGradient id="bx" x1="0" y1="0" x2="0" y2="1"><stop offset="0" stop-color="#a9bdec"/><stop offset="1" stop-color="#8ba3d8"/></linearGradient></defs>
  <rect x="24" y="3" width="35.5" height="40" rx="5" fill="#cf62f4"/>
  <path d="M7.4 18 Q7 14 11 13.6 L34 13 Q38 13 38.4 17 L41 44 H9 Z" fill="#2fb0bc"/>
  <path d="M34 14 Q40 13 41 19 L41 44 H36 Z" fill="#228e9b"/>
  <path d="M40 26 Q40 22 44 22 L71 23 Q75 23.4 75 27.4 L75 46 H40 Z" fill="#f4a414"/>
  <path d="M7 38 L38 35.4 L77.6 38 L83 58 L73 60 V76 Q60 80.6 44 80 Q24 80 9 76.6 V60 L2 58 Z" fill="url(#bx)"/>
  <path d="M9 60 L7 38 L2 58 Z M73.6 60 L77.6 38 L83 58 Z" fill="#b9c9f0"/>
  <path d="M30.5 42.4 H41 V58 H48.5 L35.7 73.4 L23 58 H30.5 Z" fill="#1b2d6b"/>
</svg>
<!-- settings (active) -->
<div class="abs" style="left:1909px;top:1675px;width:124px;height:124px;border-radius:62px;background:#22242d"></div>
<svg class="abs" style="left:1932px;top:1698px" width="79" height="79" viewBox="0 0 79 79">
  <defs><linearGradient id="st" x1="0" y1="0" x2="1" y2="1"><stop offset="0" stop-color="#3cb6c2"/><stop offset="1" stop-color="#31a9b6"/></linearGradient>
  <linearGradient id="wh" x1="0" y1="0" x2="0" y2="1"><stop offset="0" stop-color="#fff"/><stop offset="1" stop-color="#d9f3fb"/></linearGradient></defs>
  <rect x="1" y="1" width="76.6" height="76.6" rx="3" fill="url(#st)"/>
  <circle cx="39.3" cy="39.5" r="32" fill="#8fe6f4"/><circle cx="39.3" cy="39.5" r="26.6" fill="#c79be8"/><circle cx="39.3" cy="39.5" r="24.8" fill="url(#wh)"/>
  <rect x="20.6" y="30" width="37.4" height="18.8" rx="9.4" fill="#0e8a8e"/><circle cx="48.8" cy="39.4" r="7.8" fill="#fff"/>
</svg>
<div class="abs" style="left:1966.6px;top:1786.4px;width:8.4px;height:8.4px;border-radius:50%;background:#63d0df"></div>
</div>
</body>
</html>
